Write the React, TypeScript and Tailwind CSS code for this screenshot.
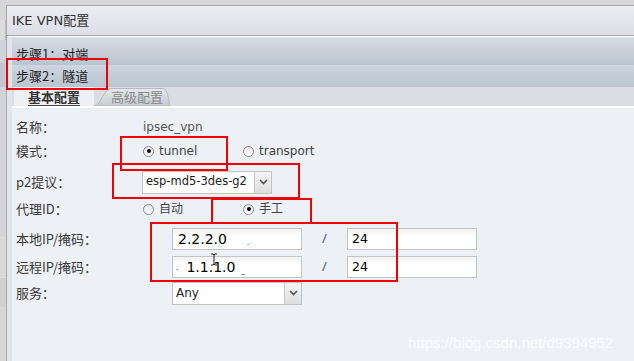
import React from "react"

const cjk = "font-['Noto_Sans_CJK_SC','Microsoft_YaHei',sans-serif]"
const latin = "font-['DejaVu_Sans','Noto_Sans_CJK_SC',sans-serif]"

function Radio({ checked, label }: { checked?: boolean; label: string }) {
  return (
    <div className="flex items-center gap-[5px]">
      <span className="flex h-[11px] w-[11px] items-center justify-center rounded-full border border-[#8a8a8a] bg-gradient-to-b from-[#e6e6e6] to-white">
        {checked && <span className="h-[4px] w-[4px] rounded-full bg-black" />}
      </span>
      <span className={`text-[12px] leading-none text-[#444] ${latin}`}>{label}</span>
    </div>
  )
}

function Select({ value, width, small }: { value: string; width: string; small?: boolean }) {
  return (
    <div className={`flex h-[23px] ${width} border border-[#c2c2c2] bg-white`}>
      <div className={`flex flex-1 items-center pl-[3px] text-[#222] ${small ? "text-[11.5px]" : "text-[12px]"} ${latin}`}>
        {value}
      </div>
      <div className="flex w-[17px] items-center justify-center border-l border-[#c8c8c8] bg-gradient-to-b from-[#f4f4f4] to-[#dedede]">
        <svg width="9" height="6" viewBox="0 0 9 6">
          <path d="M1 1 L4.5 4.5 L8 1" fill="none" stroke="#555" strokeWidth="1.6" />
        </svg>
      </div>
    </div>
  )
}

function Field({ children }: { children?: React.ReactNode }) {
  return (
    <div className="flex h-[22px] w-[130px] items-center border border-[#c4c4c4] bg-gradient-to-b from-[#f3f3f3] to-white to-40% text-black">
      {children}
    </div>
  )
}

function Row({ label, h, mt, children }: { label: string; h: string; mt: string; children?: React.ReactNode }) {
  return (
    <div className={`flex items-center ${h} ${mt}`}>
      <div className={`w-[131px] pl-[4px] text-[13px] text-[#3a3a3a] ${cjk}`}>{label}</div>
      {children}
    </div>
  )
}

export default function App() {
  return (
    <div className="relative flex h-[361px] w-[634px] overflow-hidden bg-[#d6d6d6]">
      {/* window behind */}
      <div className="flex w-[6px] flex-col pt-[20px]">
        <div className="h-[20px] border-r border-[#bbb] bg-[#dcdcdc]" />
        <div className="h-[23px] bg-[#cfd2d8]" />
        <div className="h-[24px] bg-[#c2c8d2]" />
        <div className="h-[150px] bg-[#d2d4d8]" />
        <div className="h-[40px] border-t border-[#e0e0e0] bg-[#d8d8d8]" />
        <div className="h-[30px] border-t border-[#e0e0e0] bg-[#d0d0d0]" />
      </div>

      {/* dialog */}
      <div className="mt-[5px] flex flex-1 flex-col border-l border-t border-[#a9a9a9]">
        <div className="flex h-[30px] items-center border-b border-[#a6a6a6] bg-gradient-to-b from-[#ecedf1] to-[#dcdde8] pl-[5px]">
          <span className={`text-[13px] text-[#333] ${latin}`}>
            IKE VPN<span className={cjk}>配置</span>
          </span>
        </div>
        <div className="flex flex-1 flex-col border-t border-white bg-[#e2e4ea] pl-[5px]">
          <div className={`flex h-[28px] items-center bg-gradient-to-b from-[#d8dce4] to-[#b9c4d0] pl-[4px] pt-[6px] text-[13px] text-[#222] ${cjk}`}>
            步骤1：对端
          </div>
          <div className={`flex h-[22px] items-center bg-gradient-to-b from-[#cdd6e0] to-[#bac5d0] pl-[4px] text-[13px] text-[#222] ${cjk}`}>
            步骤2：隧道
          </div>
          <div className="flex h-[19px] items-end bg-[#d9dce3] pl-[2px]">
            <div className={`flex h-[19px] w-[80px] items-end justify-center bg-[#eef0f4] text-[13px] leading-[16px] font-bold text-[#333] ${cjk}`}>
              <span className="border-b border-[#444]">基本配置</span>
            </div>
            <div className="relative h-[18px] w-[76px]">
              <svg className="absolute inset-0" width="76" height="18" viewBox="0 0 76 18">
                <defs>
                  <linearGradient id="tg" x1="0" y1="0" x2="0" y2="1">
                    <stop offset="0" stopColor="#e6e8ec" />
                    <stop offset="1" stopColor="#c6cad2" />
                  </linearGradient>
                </defs>
                <path d="M0 18 C7 18 9 0.5 18 0.5 L69 0.5 Q74 0.5 75.5 18 Z" fill="url(#tg)" stroke="#b4b8c0" />
              </svg>
              <span className={`relative flex h-full items-center justify-center pl-[10px] text-[13px] text-[#8a8a8a] ${cjk}`}>
                高级配置
              </span>
            </div>
          </div>
          <div className="h-[3px] border-t-2 border-white bg-[#e8eaef]" />
          <div className="flex flex-1 flex-col bg-[#edf0f5] pt-[8px]">
            <Row label="名称：" h="h-[20px]" mt="mt-0">
              <span className={`text-[12px] text-[#555] ${latin}`}>ipsec_vpn</span>
            </Row>
            <Row label="模式：" h="h-[20px]" mt="mt-[4px]">
              <div className="w-[100px]">
                <Radio checked label="tunnel" />
              </div>
              <Radio label="transport" />
            </Row>
            <Row label="p2提议：" h="h-[24px]" mt="mt-[9px]">
              <div className="-ml-[1px]">
                <Select value="esp-md5-3des-g2" width="w-[130px]" small />
              </div>
            </Row>
            <Row label="代理ID：" h="h-[20px]" mt="mt-[5px]">
              <div className="w-[100px]">
                <Radio label="自动" />
              </div>
              <Radio checked label="手工" />
            </Row>
            <Row label="本地IP/掩码：" h="h-[22px]" mt="mt-[9px]">
              <div className="ml-[29px] flex items-center">
                <Field>
                  <span className={`pl-[5px] text-[14px] ${latin}`}>2.2.2.0</span>
                  <span className="ml-[20px] mt-[6px] text-[8px] text-[#444]">.</span>
                </Field>
                <span className="w-[45px] text-center text-[13px] text-[#3a5a8a]">/</span>
                <Field>
                  <span className={`pl-[4px] text-[12.5px] ${latin}`}>24</span>
                </Field>
              </div>
            </Row>
            <Row label="远程IP/掩码：" h="h-[22px]" mt="mt-[6px]">
              <div className="ml-[29px] flex items-center">
                <Field>
                  <span className="pl-[3px] text-[9px] text-[#444]">.</span>
                  <span className={`pl-[8px] text-[14px] ${latin}`}>1.1.1.0</span>
                  <span className="ml-[6px] mt-[6px] text-[8px] text-[#444]">_</span>
                </Field>
                <span className="w-[45px] text-center text-[13px] text-[#3a5a8a]">/</span>
                <Field>
                  <span className={`pl-[4px] text-[12.5px] ${latin}`}>24</span>
                </Field>
              </div>
            </Row>
            <Row label="服务：" h="h-[22px]" mt="mt-[4px]">
              <div className="ml-[29px]">
                <Select value="Any" width="w-[130px]" />
              </div>
            </Row>
          </div>
        </div>
      </div>

      {/* mouse cursor */}
      <svg className="absolute left-[210px] top-[253px]" width="8" height="13" viewBox="0 0 8 13">
        <path d="M1 1 H3 L4 2 L5 1 H7 M4 2 V11 M1 12 H3 L4 11 L5 12 H7" fill="none" stroke="#222" strokeWidth="1" />
      </svg>

      {/* red annotation boxes */}
      <div className="absolute left-[6px] top-[58px] h-[32px] w-[102px] border-2 border-[#f00000]" />
      <div className="absolute left-[120px] top-[136px] h-[35px] w-[108px] border-2 border-[#f00000]" />
      <div className="absolute left-[112px] top-[163px] h-[36px] w-[188px] border-2 border-[#f00000]" />
      <div className="absolute left-[211px] top-[198px] h-[26px] w-[101px] border-2 border-[#f00000]" />
      <div className="absolute left-[150px] top-[222px] h-[60px] w-[248px] border-2 border-[#f00000]" />

      {/* watermark */}
      <div className="absolute left-[408px] top-[332px] font-['Liberation_Sans',sans-serif] text-[15px] text-white/80">
        https://blog.csdn.net/d9394952
      </div>
    </div>
  )
}
